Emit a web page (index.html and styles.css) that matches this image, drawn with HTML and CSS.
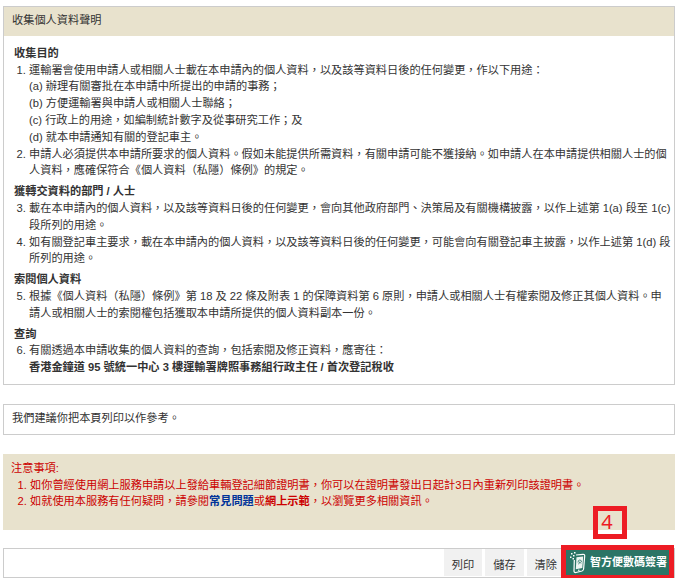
FILE: index.html
```html
<!DOCTYPE html>
<html lang="zh-Hant-HK">
<head>
<meta charset="utf-8">
<title>收集個人資料聲明</title>
<link rel="stylesheet" href="styles.css">
</head>
<body>
<main class="page">
  <section class="panel">
    <h1 class="panel-title">收集個人資料聲明</h1>
    <div class="panel-body">
      <h2>收集目的</h2>
      <ol>
        <li>運輸署會使用申請人或相關人士載在本申請內的個人資料，以及該等資料日後的任何變更，作以下用途：
          <ul class="purposes">
            <li>(a) 辦理有關審批在本申請中所提出的申請的事務；</li>
            <li>(b) 方便運輸署與申請人或相關人士聯絡；</li>
            <li>(c) 行政上的用途，如編制統計數字及從事研究工作；及</li>
            <li>(d) 就本申請通知有關的登記車主。</li>
          </ul>
        </li>
        <li>申請人必須提供本申請所要求的個人資料。假如未能提供所需資料，有關申請可能不獲接納。如申請人在本申請提供相關人士的個人資料，應確保符合《個人資料（私隱）條例》的規定。</li>
      </ol>
      <h2>獲轉交資料的部門 / 人士</h2>
      <ol start="3">
        <li>載在本申請內的個人資料，以及該等資料日後的任何變更，會向其他政府部門、決策局及有關機構披露，以作上述第 1(a) 段至 1(c) 段所列的用途。</li>
        <li>如有關登記車主要求，載在本申請內的個人資料，以及該等資料日後的任何變更，可能會向有關登記車主披露，以作上述第 1(d) 段所列的用途。</li>
      </ol>
      <h2>索閱個人資料</h2>
      <ol start="5">
        <li>根據《個人資料（私隱）條例》第 18 及 22 條及附表 1 的保障資料第 6 原則，申請人或相關人士有權索閱及修正其個人資料。申請人或相關人士的索閱權包括獲取本申請所提供的個人資料副本一份。</li>
      </ol>
      <h2>查詢</h2>
      <ol start="6">
        <li>有關透過本申請收集的個人資料的查詢，包括索閱及修正資料，應寄往：<br>
          <strong>香港金鐘道 95 號統一中心 3 樓運輸署牌照事務組行政主任 / 首次登記稅收</strong></li>
      </ol>
    </div>
  </section>

  <p class="panel advice">我們建議你把本頁列印以作參考。</p>

  <section class="notice">
    <p>注意事項:</p>
    <ol>
      <li>如你曾經使用網上服務申請以上發給車輛登記細節證明書，你可以在證明書發出日起計3日內重新列印該證明書。</li>
      <li>如就使用本服務有任何疑問，請參閱<a class="faq" href="#faq">常見問題</a>或<a href="#demo">網上示範</a>，以瀏覽更多相關資訊。</li>
    </ol>
  </section>

  <div class="panel actions">
    <button type="button">列印</button>
    <button type="button">儲存</button>
    <button type="button">清除</button>
    <button type="button" class="sign">
      <svg width="16" height="22" viewBox="0 0 16 22" aria-hidden="true">
        <path d="M6 3 13 2.300Q14.800 2.200 14.700 4L13.600 17Q13.400 18.600 12 19L6 20.500Q4 20.800 4 19L4.300 8" fill="none" stroke="#fff" stroke-width="1.200"/>
        <path d="M6.500 5.200 13.200 4.500 12.300 16 5.800 17.200Z" fill="#edf5f2"/>
        <path d="M8 10.500Q8 8 9.800 8T11.600 10.200M8.600 12.300 9.800 9.800 11 11.500" fill="none" stroke="#2b7566" stroke-width=".8"/>
        <path d="M1 1h1.500v1.500H1zM4 0h1.500v1.500H4zM3 3h1.500v1.500H3zM0 4.500h1.500V6H0zM2.500 6H4v1.500H2.500z" fill="#fff"/>
        <circle cx="8.800" cy="18.300" r=".8" fill="#fff"/>
      </svg>
      <span>智方便數碼簽署</span>
    </button>
    <span class="step">4</span>
  </div>
</main>
</body>
</html>
```
FILE: styles.css
```css
* {
  box-sizing: border-box;
}

body {
  margin: 6px 6px 0 3px;
  background: #fff;
  color: #333;
  font-family: "Liberation Sans", "Noto Sans CJK TC", sans-serif;
  font-size: 70%;
  line-height: 1.5;
}

h1, h2, p, ol, ul {
  margin: 0;
  padding: 0;
  font-size: inherit;
}

.page {
  display: flex;
  flex-direction: column;
}

.panel {
  border: 1px solid #ccc;
}

.panel-title {
  padding: 5px 8px 7px;
  background: #e8e2cd;
  font-weight: normal;
}

.panel-body {
  padding: 9px 2px 8px 10px;
}

h2 {
  margin-top: 4px;
  font-weight: bold;
}

h2:first-child {
  margin-top: 0;
}

.panel-body ol {
  padding-left: 15px;
}

.purposes {
  list-style: none;
}

.advice {
  margin-top: 19px;
  padding: 5px 8px 7px;
}

.notice {
  margin-top: 19px;
  padding: 6px 8px 20px;
  background: #e8e2cd;
  color: #c00;
}

.notice ol {
  padding-left: 19px;
}

.notice a {
  color: inherit;
  font-weight: bold;
  text-decoration: none;
}

.notice .faq {
  color: #039;
}

.actions {
  position: relative;
  display: flex;
  justify-content: flex-end;
  gap: 3px;
  margin-top: 18px;
  padding: 0 5px 1px 0;
}

.actions button {
  height: 27px;
  padding: 5px 8px 0;
  border: 0;
  background: #f1f1f1;
  color: #333;
  font: inherit;
}

.actions .sign {
  display: flex;
  align-items: center;
  gap: 4px;
  height: 25px;
  margin: 1px 0 0 -2px;
  padding: 0 2px 0 4px;
  background: #2b7566;
  color: #fff;
  font-size: 11px;
  font-weight: bold;
  outline: 5px solid #ed1c24;
}

.step {
  position: absolute;
  right: 47px;
  bottom: 38px;
  width: 34px;
  height: 33px;
  padding-right: 6px;
  border: 5px solid #ed1c24;
  color: #ed1c24;
  font-family: "Noto Sans", sans-serif;
  font-size: 20px;
  line-height: 22px;
  text-align: center;
}
```
